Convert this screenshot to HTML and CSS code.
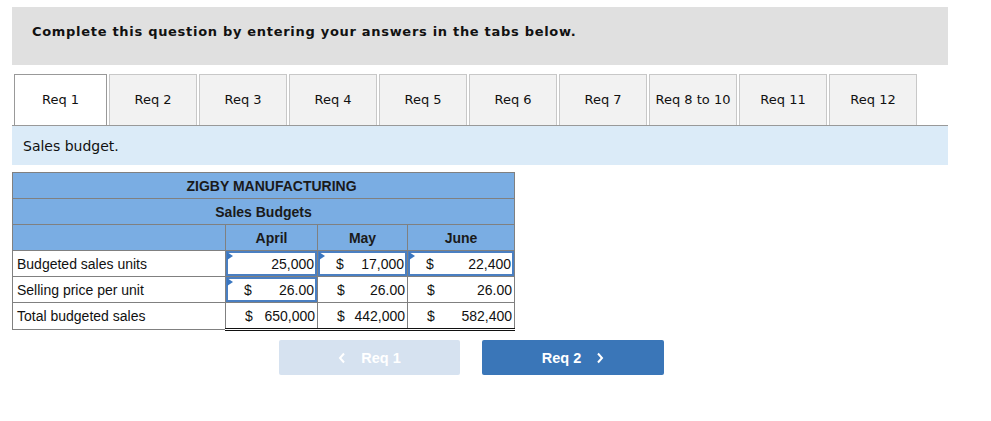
FILE: index.html
```html
<!DOCTYPE html>
<html>
<head>
<meta charset="utf-8">
<link rel="stylesheet" href="styles.css">
</head>
<body>
<div class="page">
  <div class="instr">Complete this question by entering your answers in the tabs below.</div>
  <div class="tabs">
    <div class="tab active">Req 1</div>
    <div class="tab">Req 2</div>
    <div class="tab">Req 3</div>
    <div class="tab">Req 4</div>
    <div class="tab">Req 5</div>
    <div class="tab">Req 6</div>
    <div class="tab">Req 7</div>
    <div class="tab">Req 8 to 10</div>
    <div class="tab">Req 11</div>
    <div class="tab">Req 12</div>
  </div>
  <div class="panel">Sales budget.</div>
  <table class="budget">
    <colgroup>
      <col class="c-label"><col class="c-apr"><col class="c-may"><col class="c-jun">
    </colgroup>
    <tr class="hd"><td colspan="4" class="company">ZIGBY MANUFACTURING</td></tr>
    <tr class="hd"><td colspan="4">Sales Budgets</td></tr>
    <tr class="hd months"><td class="blank"></td><td>April</td><td>May</td><td>June</td></tr>
    <tr>
      <td class="label">Budgeted sales units</td>
      <td class="in"><div class="box"><span class="tri"></span><span class="sym"></span><span class="num">25,000</span></div></td>
      <td class="in"><div class="box"><span class="tri"></span><span class="sym">$</span><span class="num">17,000</span></div></td>
      <td class="in"><div class="box"><span class="tri"></span><span class="sym">$</span><span class="num">22,400</span></div></td>
    </tr>
    <tr>
      <td class="label">Selling price per unit</td>
      <td class="in"><div class="box"><span class="tri"></span><span class="sym">$</span><span class="num">26.00</span></div></td>
      <td><div class="val"><span class="sym">$</span><span class="num">26.00</span></div></td>
      <td><div class="val"><span class="sym">$</span><span class="num">26.00</span></div></td>
    </tr>
    <tr class="total">
      <td class="label">Total budgeted sales</td>
      <td><div class="val"><span class="sym">$</span><span class="num">650,000</span></div></td>
      <td><div class="val"><span class="sym">$</span><span class="num">442,000</span></div></td>
      <td><div class="val"><span class="sym">$</span><span class="num">582,400</span></div></td>
    </tr>
  </table>
  <div class="nav">
    <div class="btn prev">
      <svg width="8" height="12" viewBox="0 0 8 12"><polyline points="6,1.5 2,6 6,10.5" fill="none" stroke="#fff" stroke-width="2"/></svg>
      <span>Req 1</span>
    </div>
    <div class="btn next">
      <span>Req 2</span>
      <svg width="8" height="12" viewBox="0 0 8 12"><polyline points="2,1.5 6,6 2,10.5" fill="none" stroke="#fff" stroke-width="2"/></svg>
    </div>
  </div>
</div>
</body>
</html>
```
FILE: styles.css
```css
* { box-sizing: border-box; }
body { margin: 0; background: #fff; font-family: "DejaVu Sans", Verdana, sans-serif; color: #111; }
.page { padding: 7px 0 0 12px; width: 948px; }
.instr {
  height: 58px; background: #e0e0e0; padding: 17px 0 0 20px;
  font-weight: bold; font-size: 13px; letter-spacing: 0.7px; color: #111;
}
.tabs { display: flex; gap: 2px; margin-top: 9px; padding-left: 2px; height: 51px; }
.tab {
  width: 88px; height: 51px; border: 1px solid #c8c8c8; border-bottom: none;
  background: #f2f2f2; font-size: 13px; display: flex; align-items: center; justify-content: center;
  padding-bottom: 1px; color: #111;
}
.tab.active { width: 93px; background: #fff; border-color: #999; }
.panel {
  height: 40px; background: #dbebf8; border-top: 1px solid #999;
  font-size: 14px; padding: 12px 0 0 11px; color: #111;
}
.budget {
  margin-top: 7px; border-collapse: collapse; width: 502px; table-layout: fixed;
  font-family: "Liberation Sans", Arial, sans-serif; font-size: 14px; color: #111;
  border: 1px solid #808080;
}
.c-label { width: 213px; }
.c-apr { width: 92px; }
.c-may { width: 90px; }
.c-jun { width: 107px; }
.budget td { border: 1px solid #808080; height: 26px; padding: 0; }
.hd td { background: #7aade3; text-align: center; font-weight: bold; color: #1a1a1a; }
.hd td.company { padding-left: 16px; }
.label { padding-left: 4px !important; background: #fff; }
.in { padding: 0; }
.box {
  position: relative; height: 25px; border: 2px solid #4a7fc2; display: flex;
  align-items: center; justify-content: space-between; padding: 0 1px 0 16px; background: #fff;
}
.val { display: flex; align-items: center; justify-content: space-between; padding: 0 2px 0 19px; height: 25px; }
.tri {
  position: absolute; left: -1px; top: -1px; width: 0; height: 0;
  border-top: 4px solid transparent; border-bottom: 4px solid transparent; border-left: 6px solid #3a76c0;
}
.total td:not(.label) { border-bottom: 3px double #111; }
.nav { display: flex; gap: 22px; margin: 9px 0 0 267px; }
.btn {
  width: 181px; height: 35px; border-radius: 2px; display: flex; align-items: center; justify-content: center;
  gap: 15px; color: #fff; font-family: "Liberation Sans", Arial, sans-serif; font-weight: bold; font-size: 14.5px;
}
.btn.prev { background: #d6e2f0; }
.btn.next { background: #3a76b8; width: 182px; }
.btn svg { display: block; }
```
